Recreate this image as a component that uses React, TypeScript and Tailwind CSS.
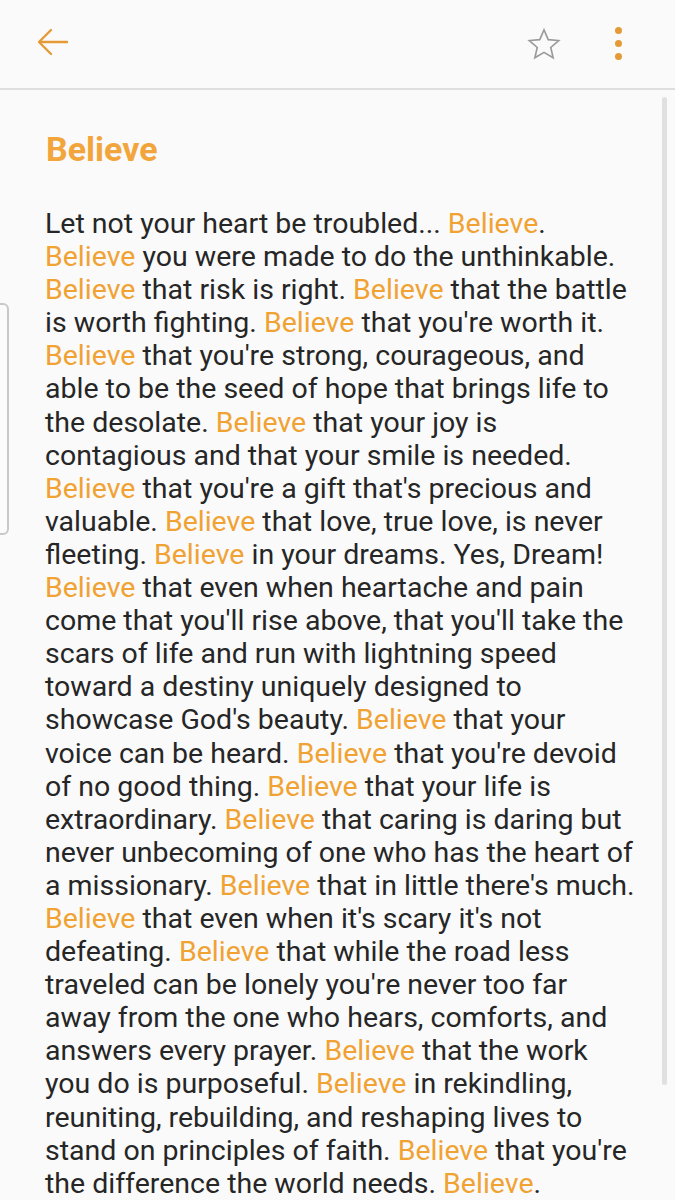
const lines: string[] = [
  "Let not your heart be troubled... *Believe*.",
  "*Believe* you were made to do the unthinkable.",
  "*Believe* that risk is right. *Believe* that the battle",
  "is worth fighting. *Believe* that you're worth it.",
  "*Believe* that you're strong, courageous, and",
  "able to be the seed of hope that brings life to",
  "the desolate. *Believe* that your joy is",
  "contagious and that your smile is needed.",
  "*Believe* that you're a gift that's precious and",
  "valuable. *Believe* that love, true love, is never",
  "fleeting. *Believe* in your dreams. Yes, Dream!",
  "*Believe* that even when heartache and pain",
  "come that you'll rise above, that you'll take the",
  "scars of life and run with lightning speed",
  "toward a destiny uniquely designed to",
  "showcase God's beauty. *Believe* that your",
  "voice can be heard. *Believe* that you're devoid",
  "of no good thing. *Believe* that your life is",
  "extraordinary. *Believe* that caring is daring but",
  "never unbecoming of one who has the heart of",
  "a missionary. *Believe* that in little there's much.",
  "*Believe* that even when it's scary it's not",
  "defeating. *Believe* that while the road less",
  "traveled can be lonely you're never too far",
  "away from the one who hears, comforts, and",
  "answers every prayer. *Believe* that the work",
  "you do is purposeful. *Believe* in rekindling,",
  "reuniting, rebuilding, and reshaping lives to",
  "stand on principles of faith. *Believe* that you're",
  "the difference the world needs. *Believe*.",
]

function Line({text}:{text:string}) {
  const parts = text.split("*")
  return (
    <div className="whitespace-pre h-[33.1px] leading-[33.1px]">
      {parts.map((p,i)=> i%2===1
        ? <span key={i} className="text-[#f0a233]">{p}</span>
        : <span key={i}>{p}</span>)}
    </div>
  )
}

export default function App() {
  return (
    <div className="w-[675px] h-[1200px] bg-[#fafafa] overflow-hidden relative" style={{fontFamily:"Roboto, sans-serif"}}>
      {/* top bar */}
      <div className="h-[90px] flex items-center border-b-2 border-[#dedede]">
        <button className="ml-[36px] w-[34px] h-[34px] flex items-center justify-center">
          <svg width="34" height="34" viewBox="0 0 34 34" fill="none" stroke="#e59a38" strokeWidth="2.4" strokeLinecap="round" strokeLinejoin="round">
            <path d="M31 15H4" />
            <path d="M15 3L3 15L15 27" />
          </svg>
        </button>
        <div className="flex-1"/>
        <svg width="36" height="36" viewBox="0 0 24 24" fill="none" stroke="#9a9a9a" strokeWidth="1.1" strokeLinejoin="miter" className="mr-[53px] -mt-[1px]">
          <path d="M12 2.5l2.8 6.6 7 .6-5.3 4.6 1.6 6.9L12 17.6l-6.1 3.6 1.6-6.9-5.3-4.6 7-.6z" />
        </svg>
        <div className="flex flex-col gap-[6px] mr-[53px] -mt-[1px]">
          <div className="w-[7px] h-[7px] rounded-full bg-[#e59a38]"/>
          <div className="w-[7px] h-[7px] rounded-full bg-[#e59a38]"/>
          <div className="w-[7px] h-[7px] rounded-full bg-[#e59a38]"/>
        </div>
      </div>

      {/* note */}
      <div className="pl-[46px] pt-[39px]">
        <h1 className="text-[34px] leading-[40px] font-bold text-[#f2a53a]">Believe</h1>
      </div>
      <div className="pl-[45px] mt-[38px] text-[28.5px] text-[#262626]">
        {lines.map((l,i)=><Line key={i} text={l}/>)}
      </div>

      {/* scrollbar */}
      <div className="absolute right-[8px] top-[97px] w-[5px] h-[988px] rounded-full bg-[#e0e0e0]"/>
      {/* edge handle */}
      <div className="absolute left-[-6px] top-[303px] w-[15px] h-[232px] rounded-[6px] border-2 border-[#c8c8c8] bg-[#fbfbfb]"/>
    </div>
  )
}
